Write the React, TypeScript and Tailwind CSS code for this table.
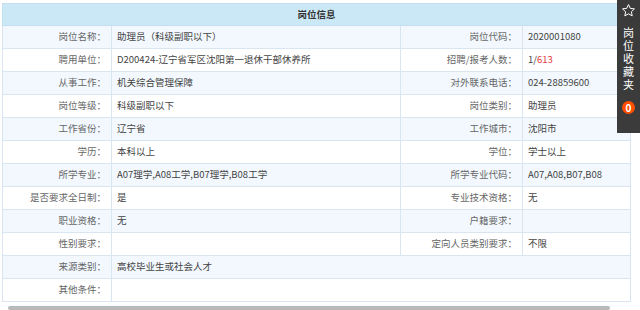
import React from 'react';

type Cell = { label: string; value: React.ReactNode };
type Row = { left: Cell; right?: Cell };

const rows: Row[] = [
  { left: { label: '岗位名称：', value: '助理员（科级副职以下）' }, right: { label: '岗位代码：', value: '2020001080' } },
  {
    left: { label: '聘用单位：', value: 'D200424-辽宁省军区沈阳第一退休干部休养所' },
    right: {
      label: '招聘/报考人数：',
      value: (
        <>
          1/<span className="text-[#e4393c]">613</span>
        </>
      ),
    },
  },
  { left: { label: '从事工作：', value: '机关综合管理保障' }, right: { label: '对外联系电话：', value: '024-28859600' } },
  { left: { label: '岗位等级：', value: '科级副职以下' }, right: { label: '岗位类别：', value: '助理员' } },
  { left: { label: '工作省份：', value: '辽宁省' }, right: { label: '工作城市：', value: '沈阳市' } },
  { left: { label: '学历：', value: '本科以上' }, right: { label: '学位：', value: '学士以上' } },
  { left: { label: '所学专业：', value: 'A07理学,A08工学,B07理学,B08工学' }, right: { label: '所学专业代码：', value: 'A07,A08,B07,B08' } },
  { left: { label: '是否要求全日制：', value: '是' }, right: { label: '专业技术资格：', value: '无' } },
  { left: { label: '职业资格：', value: '无' }, right: { label: '户籍要求：', value: '' } },
  { left: { label: '性别要求：', value: '' }, right: { label: '定向人员类别要求：', value: '不限' } },
  { left: { label: '来源类别：', value: '高校毕业生或社会人才' } },
  { left: { label: '其他条件：', value: '' } },
];

function StarIcon() {
  return (
    <svg width="15" height="15" viewBox="0 0 24 24" fill="none" stroke="white" strokeWidth="1.6" strokeLinejoin="round">
      <path d="M12 2.5l2.9 6.1 6.6.8-4.9 4.6 1.3 6.6L12 17.3l-5.9 3.3 1.3-6.6-4.9-4.6 6.6-.8z" />
    </svg>
  );
}

export default function App() {
  const label = 'text-right pr-[5px] text-[#666] border border-[#d9e6f1] whitespace-nowrap';
  const value = 'text-left pl-[5px] text-[#444] border border-[#d9e6f1] whitespace-nowrap';

  return (
    <div
      className="relative w-[640px] h-[310px] bg-white overflow-hidden"
      style={{ fontFamily: '"Noto Sans CJK SC", "Noto Sans", sans-serif' }}
    >
      <div className="pt-[3px] pl-[2px]">
        <table className="w-[628px] border-collapse table-fixed text-[9.5px] leading-none">
          <colgroup>
            <col className="w-[109px]" />
            <col className="w-[289px]" />
            <col className="w-[122px]" />
            <col className="w-[108px]" />
          </colgroup>
          <thead>
            <tr className="h-[22px] bg-[#cbe8f7]">
              <th colSpan={4} className="text-center font-bold text-[#333] border border-[#c3dff0]">
                岗位信息
              </th>
            </tr>
          </thead>
          <tbody>
            {rows.map((r, i) => (
              <tr key={i} className={`h-[23px] ${i % 2 === 0 ? 'bg-[#f2f8fe]' : 'bg-white'}`}>
                <td className={label}>{r.left.label}</td>
                <td className={value} colSpan={r.right ? 1 : 3}>
                  {r.left.value}
                </td>
                {r.right && (
                  <>
                    <td className={label}>{r.right.label}</td>
                    <td className={value}>{r.right.value}</td>
                  </>
                )}
              </tr>
            ))}
          </tbody>
        </table>
      </div>

      {/* scrollbar */}
      <div className="absolute left-[8px] top-[306px] w-[602px] h-[4px] bg-[#b9b9b9] rounded-sm" />

      {/* favourites side tab */}
      <div className="absolute right-0 top-0 w-[23px] h-[133px] bg-[#3b3b3b] flex flex-col items-center pt-[3px]">
        <StarIcon />
        <div className="mt-[8px] flex flex-col items-center text-white text-[11px] leading-[13px]">
          <span>岗</span>
          <span>位</span>
          <span>收</span>
          <span>藏</span>
          <span>夹</span>
        </div>
        <div className="mt-[10px] w-[13px] h-[13px] rounded-full bg-[#ff4e00] text-white text-[10px] font-bold flex items-center justify-center">
          0
        </div>
      </div>
    </div>
  );
}
